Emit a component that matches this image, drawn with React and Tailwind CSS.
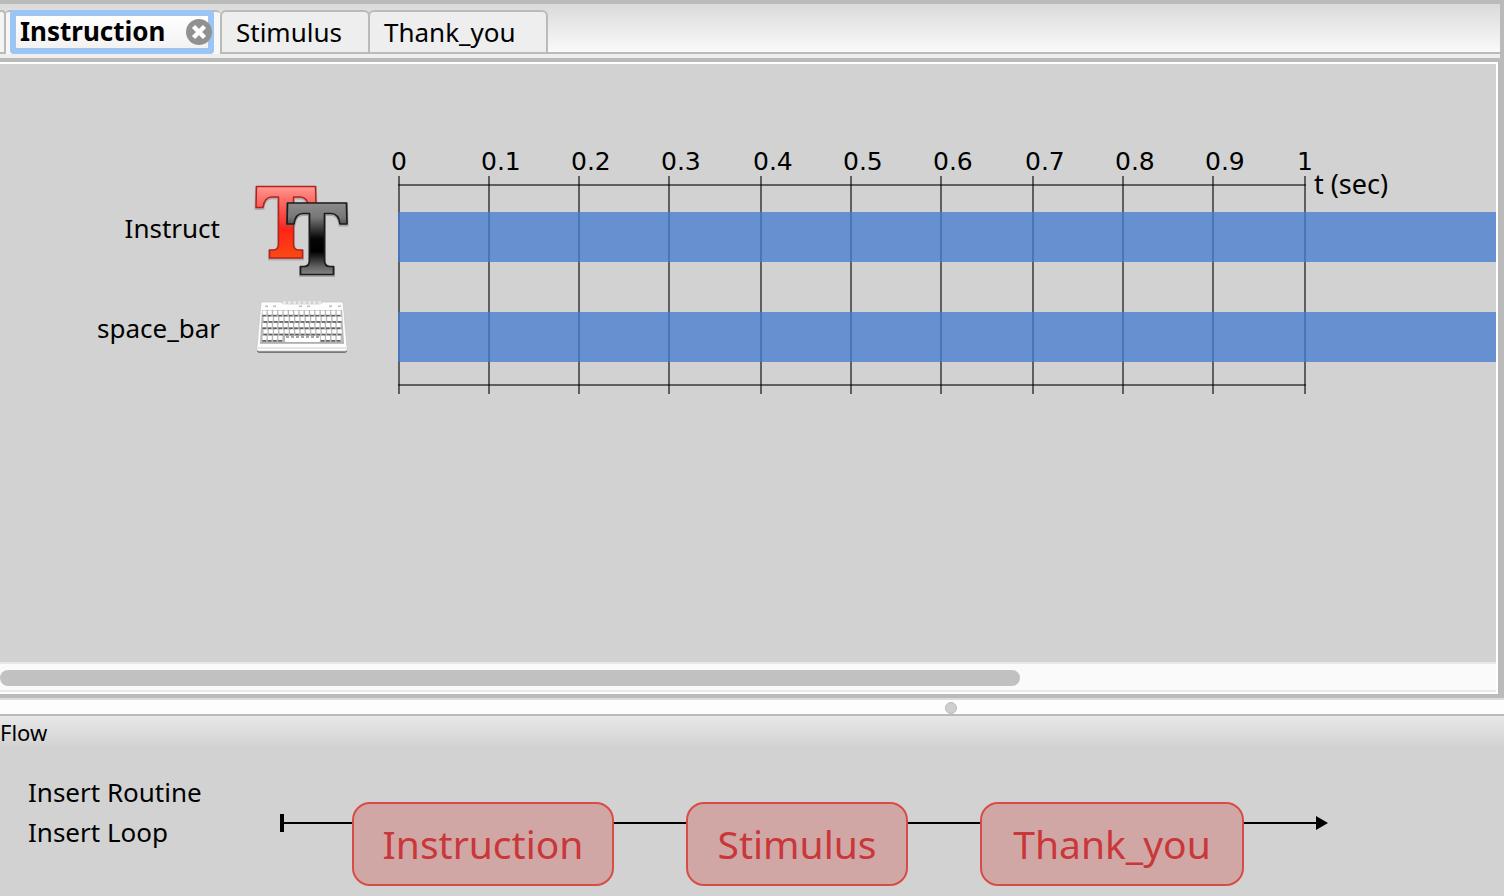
import React from "react";

const TICKS = [
  ["0", 17], ["0.1", 107], ["0.2", 197], ["0.3", 287], ["0.4", 379], ["0.5", 469],
  ["0.6", 559], ["0.7", 651], ["0.8", 741], ["0.9", 831], ["1", 923],
];

const T_SHAPE =
  "M2.5 4.5H61.5L62 25.5H55C54 18 51 15 46 15H39.500V62C39.500 66 41 68 45 68H48.500V76H15.500V68H19C23 68 24.500 66 24.500 62V15H18C13 15 10 18 9 25.500H2Z";

function TextIcon() {
  return (
    <svg className="h-24 w-24 shrink-0" viewBox="0 0 96 96" aria-hidden="true">
      <defs>
        <linearGradient id="redT" x1="0" y1="0" x2="0" y2="1">
          <stop offset="0" stopColor="#ff9a94" />
          <stop offset="0.15" stopColor="#fb7770" />
          <stop offset="0.45" stopColor="#f8403a" />
          <stop offset="0.6" stopColor="#ff2418" />
          <stop offset="1" stopColor="#f94a12" />
        </linearGradient>
        <linearGradient id="blackT" x1="0" y1="0" x2="0" y2="1">
          <stop offset="0" stopColor="#8b8b8b" />
          <stop offset="0.2" stopColor="#777777" />
          <stop offset="0.5" stopColor="#050505" />
          <stop offset="0.68" stopColor="#000000" />
          <stop offset="0.9" stopColor="#666666" />
          <stop offset="1" stopColor="#858585" />
        </linearGradient>
      </defs>
      <path d={T_SHAPE} fill="none" stroke="#777" strokeOpacity="0.4" strokeWidth="3" transform="translate(0 1)" />
      <path d={T_SHAPE} fill="url(#redT)" stroke="#b5211c" strokeWidth="1.500" strokeLinejoin="round" />
      <g transform="translate(31 16.500)">
        <path d={T_SHAPE} fill="none" stroke="#666" strokeOpacity="0.4" strokeWidth="3" transform="translate(0 1)" />
        <path d={T_SHAPE} fill="url(#blackT)" stroke="#1c1c1c" strokeWidth="1.700" strokeLinejoin="round" />
      </g>
    </svg>
  );
}

function KeyboardIcon() {
  const rows = [0, 1, 2, 3, 4];
  const keys = Array.from({ length: 15 }, (_, i) => i);
  return (
    <svg className="h-24 w-24 shrink-0" viewBox="0 0 96 96" aria-hidden="true">
      <path d="M3 67H93V69.500Q92 71 90 71H6Q4 71 3 69.500Z" fill="#777" />
      <path d="M7 20H27L30 22H66L69 20H89L93 65V68Q93 69 91 69H5Q3 69 3 68V65Z" fill="#fdfdfd" stroke="#c4c4c4" strokeWidth="0.700" />
      <path d="M29 20.500H67" stroke="#e6e6e6" strokeWidth="3" strokeDasharray="3 2" />
      <path d="M8 28H88L90 61.500H6Z" fill="#b8b8b8" />
      {[11, 19, 45, 53, 75, 84].map((x) => (
        <rect key={x} x={x} y="23.500" width="3" height="1.500" fill="#bdbdbd" />
      ))}
      {rows.map((r) =>
        keys.map((k) =>
          r === 4 && k > 3 && k < 11 ? null : (
            <g key={`${r}-${k}`}>
              <rect x={8.5 + k * 5.3 + (r % 2)} y={28.5 + r * 6.3} width="4" height="4.400" rx="0.800" fill="#fff" />
              <path d={`M${8.5 + k * 5.3 + (r % 2)} ${33.6 + r * 6.3}h3.600`} stroke="#5c5c5c" strokeWidth="1.500" />
            </g>
          )
        )
      )}
      <rect x="31" y="54" width="35" height="6" rx="1" fill="#fff" />
      <path d="M32 55h34" stroke="#8a8a8a" strokeWidth="1.500" strokeDasharray="3 2" />
      <path d="M6 61H90" stroke="#a2a2a2" strokeWidth="1" />
      <path d="M4 66H92" stroke="#e5e5ea" strokeWidth="2" />
    </svg>
  );
}

function Timeline() {
  return (
    <svg
      className="ml-8 h-[252px] min-w-0 flex-1 font-['DejaVu_Sans',sans-serif] text-[25px]"
      role="img"
      aria-label="Routine timeline"
    >
      <g stroke="#000" strokeOpacity="0.55" strokeWidth="2">
        <path d="M16 41H924M16 241H924" />
        {TICKS.map(([label, x]) => (
          <path key={label} d={`M${x} 32V250`} />
        ))}
      </g>
      {TICKS.map(([label, x]) => (
        <text key={label} x={x - 8} y="26">{label}</text>
      ))}
      <text x="932" y="50" className="font-['Noto_Sans',sans-serif] text-[27px]">t (sec)</text>
      {[68, 168].map((y) => (
        <g key={y}>
          <rect x="16" y={y} width="100%" height="50" fill="#6790d0" />
          {TICKS.map(([label, x]) => (
            <rect key={label} x={x - 1} y={y} width="2" height="50" fill="#4776ba" />
          ))}
        </g>
      ))}
    </svg>
  );
}

function Component({ name, children }) {
  return (
    <div className="flex h-[100px] items-center gap-[34px]">
      <span className="w-[220px] pb-1 text-right">{name}</span>
      {children}
    </div>
  );
}

function Node({ width, children }) {
  return (
    <button className={`${width} h-[84px] shrink-0 rounded-[18px] border-2 border-[#d84c48] bg-[#d1a7a5] text-center text-[39px] leading-[80px] text-[#c9373a]`}>
      {children}
    </button>
  );
}

export default function App() {
  return (
    <div className="flex min-h-screen flex-col overflow-hidden bg-[#d2d2d2] font-['Noto_Sans',sans-serif] text-[26px] leading-10 text-black">
      <main className="flex flex-1 flex-col border-t-4 border-r-4 border-[#bababa]">
        <div className="flex h-[50px] border-b-2 border-[#bababa] bg-linear-to-b from-[#dadada] to-[#fafafa] pt-1.5" role="tablist">
          <div className="w-1.5 shrink-0 rounded-tr border-t-2 border-r-2 border-[#bababa] bg-[#f4f4f4]" />
          <div className="-mb-0.5 flex shrink-0 rounded-t border-t-2 border-[#bababa] bg-[#f7f7f7] pr-1.5 pl-1">
            <div className="-mt-0.5 flex h-11 w-[204px] items-center rounded border-6 border-[#9bc5f2] bg-linear-to-b from-white to-[#f2f2f2]">
              <button role="tab" aria-selected="true" className="w-[170px] shrink-0 pb-0.5 pl-1 text-left leading-8 font-bold">
                Instruction
              </button>
              <button aria-label="Close Instruction" className="relative shrink-0">
                <svg className="h-[26px] w-[26px]" viewBox="0 0 26 26">
                  <circle cx="13" cy="13" r="13" fill="#919191" />
                  <path d="M7.500 7.500l11 11M18.500 7.500l-11 11" stroke="#fff" strokeWidth="4.500" />
                </svg>
              </button>
            </div>
          </div>
          <button role="tab" className="w-[150px] shrink-0 rounded-t-md border-2 border-b-0 border-[#bababa] bg-[#eeeeee] pb-1 pl-3.5 text-left">
            Stimulus
          </button>
          <button role="tab" className="-ml-0.5 w-[180px] shrink-0 rounded-t-md border-2 border-b-0 border-[#bababa] bg-[#eeeeee] pb-1 pl-3.5 text-left">
            Thank_you
          </button>
        </div>
        <div className="h-1 bg-[#eeeeee]" />
        <div className="flex flex-1 flex-col border-t-4 border-r-2 border-b-4 border-[#bababa]">
          <div className="flex flex-1 flex-col border-t-2 border-r-2 border-b-2 border-white bg-[#d2d2d2]">
            <section className="flex flex-1 overflow-hidden pt-20 pb-10">
              <div className="shrink-0 pt-9">
                <Component name="Instruct"><TextIcon /></Component>
                <Component name="space_bar"><KeyboardIcon /></Component>
              </div>
              <Timeline />
            </section>
            <div className="border-y-2 border-[#e8e8e8] bg-[#fafafa] pt-1.5 pb-1">
              <div className="h-4 w-[68.2%] rounded-full bg-[#c1c1c1]" />
            </div>
          </div>
        </div>
      </main>
      <div className="flex h-[18px] border-t-2 border-b-2 border-t-[#dcdcdc] border-b-[#bababa] bg-[#fdfdfd] pt-0.5 pl-[62.8%]">
        <div className="h-3 w-3 rounded-full border border-[#bababa] bg-[#cfcfcf]" />
      </div>
      <section>
        <h2 className="h-[34px] bg-linear-to-b from-[#e8e8e8] to-[#d0d0d0] text-[22px] leading-8">Flow</h2>
        <div className="flex pt-[22px] pb-2.5 pl-7">
          <div className="flex w-[252px] shrink-0 flex-col items-start">
            <button>Insert Routine</button>
            <button>Insert Loop</button>
          </div>
          <div className="flex items-start pt-[30px]">
            <div className="mt-3 h-[18px] w-1 bg-black" />
            <div className="mt-5 h-0.5 w-[68px] bg-black" />
            <Node width="w-[262px]">Instruction</Node>
            <div className="mt-5 h-0.5 w-[72px] bg-black" />
            <Node width="w-[222px]">Stimulus</Node>
            <div className="mt-5 h-0.5 w-[72px] bg-black" />
            <Node width="w-[264px]">Thank_you</Node>
            <div className="mt-5 h-0.5 w-[72px] bg-black" />
            <svg className="mt-3.5 h-3.5 w-3" viewBox="0 0 12 14" aria-hidden="true">
              <path d="M0 0L12 7L0 14Z" />
            </svg>
          </div>
        </div>
      </section>
    </div>
  );
}
